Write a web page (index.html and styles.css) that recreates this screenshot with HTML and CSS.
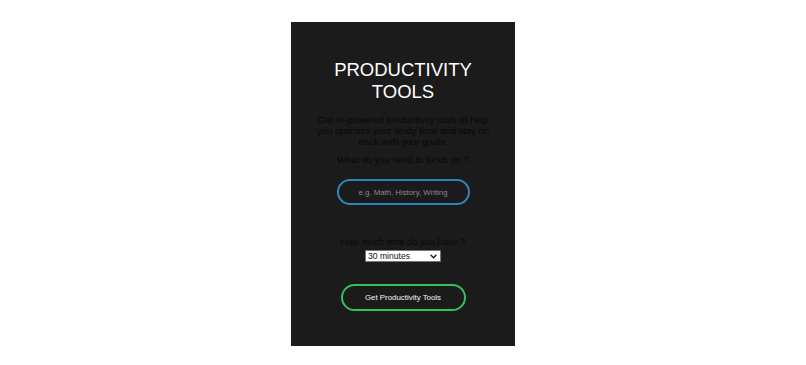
FILE: index.html
```html
<!DOCTYPE html>
<html lang="en">
<head>
<meta charset="utf-8">
<title>Productivity Tools</title>
<link rel="stylesheet" href="styles.css">
</head>
<body>
<main class="card">
  <h1 class="title">PRODUCTIVITY TOOLS</h1>
  <p class="intro">Get AI-powered productivity tools to help you optimize your study time and stay on track with your goals.</p>
  <p class="question">What do you need to focus on ?</p>
  <input class="focus-input" type="text" placeholder="e.g. Math, History, Writing">
  <label class="time-label" for="time">How much time do you have ?</label>
  <span class="select-wrap">
    <select id="time" class="time-select">
      <option>30 minutes</option>
      <option>1 hour</option>
      <option>2 hours</option>
    </select>
    <svg class="chevron" width="7" height="5" viewBox="0 0 7 5" aria-hidden="true"><path d="M1 1.2 L3.5 3.7 L6 1.2" fill="none" stroke="#111" stroke-width="1.3" stroke-linecap="round" stroke-linejoin="round"/></svg>
  </span>
  <button class="submit" type="button">Get Productivity Tools</button>
</main>
</body>
</html>
```
FILE: styles.css
```css
html, body {
  margin: 0;
  padding: 0;
  background: #ffffff;
}

body {
  padding-top: 22px;
  font-family: "Liberation Sans", Arial, sans-serif;
}

.card {
  width: 224px;
  height: 324px;
  box-sizing: border-box;
  margin: 0 auto;
  padding: 37px 22px 0;
  background: #1b1b1b;
  display: flex;
  flex-direction: column;
  align-items: center;
  text-align: center;
}

.title {
  margin: 0;
  font-size: 18.5px;
  line-height: 22px;
  font-weight: normal;
  color: #ffffff;
}

.intro {
  margin: 11px 0 0;
  font-size: 9.5px;
  line-height: 11px;
  color: #080808;
}

.question {
  margin: 8px 0 0;
  font-size: 9.3px;
  line-height: 11px;
  color: #080808;
}

.focus-input {
  margin-top: 13px;
  width: 133px;
  height: 26px;
  box-sizing: border-box;
  border: 2px solid #2f83bb;
  border-radius: 13px;
  background: #1b1b1b;
  color: #dddddd;
  font-family: "Liberation Sans", Arial, sans-serif;
  font-size: 7.8px;
  text-align: center;
  outline: none;
  padding: 0 8px;
}

.focus-input::placeholder {
  color: #8a8a8a;
}

.time-label {
  margin-top: 32px;
  font-size: 9.3px;
  line-height: 11px;
  color: #080808;
}

.select-wrap {
  position: relative;
  margin-top: 2px;
  display: block;
  width: 76px;
  height: 12px;
}

.time-select {
  -webkit-appearance: none;
  appearance: none;
  display: block;
  width: 76px;
  height: 12px;
  box-sizing: border-box;
  padding: 0 0 0 2px;
  border: 1px solid #767676;
  border-radius: 1px;
  background: #ffffff;
  color: #111111;
  font-family: "Liberation Sans", Arial, sans-serif;
  font-size: 8.6px;
  line-height: 10px;
  text-align: left;
}

.chevron {
  position: absolute;
  right: 4px;
  top: 3.5px;
  pointer-events: none;
}

.submit {
  margin-top: 22px;
  width: 125px;
  height: 27px;
  box-sizing: border-box;
  border: 2px solid #33c15c;
  border-radius: 14px;
  background: #1b1b1b;
  color: #f4f4f4;
  font-family: "Liberation Sans", Arial, sans-serif;
  font-size: 7.9px;
  cursor: pointer;
  padding: 0;
}
```
